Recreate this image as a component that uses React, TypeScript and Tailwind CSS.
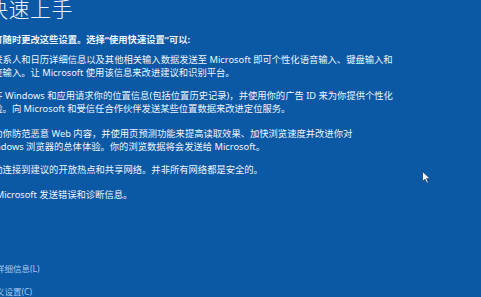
// Windows 10 OOBE "快速上手" screen (cropped on the left)

const bodyFont = {
  fontFamily: '"Noto Sans", "Noto Sans CJK SC", sans-serif',
};

const Cursor = () => (
  <svg
    className="absolute left-[422px] top-[171px] w-[9px] h-[13px]"
    viewBox="0 0 9 13"
    aria-hidden="true"
  >
    <path
      d="M0.5 0.5 L0.5 10.5 L3 8.2 L4.8 12.2 L6.3 11.5 L4.6 7.6 L8 7.6 Z"
      fill="#ffffff"
      stroke="#1b3f70"
      strokeWidth="0.8"
      strokeLinejoin="round"
    />
  </svg>
);

export default function App() {
  return (
    <div
      className="relative w-[481px] h-[297px] overflow-hidden bg-[#0b58a5] text-[#eef4fb]"
      style={bodyFont}
    >
      <div className="flex flex-col -ml-[16px] whitespace-nowrap">
        <h1 className="ml-[3px] -mt-[3px] text-[21px] leading-[24px] font-light tracking-[0.5px]">
          快速上手
        </h1>

        <p className="mt-[11.5px] text-[9.3px] leading-[13px] font-bold">
          你可随时更改这些设置。选择“使用快速设置”可以:
        </p>

        <p className="mt-[7px] text-[9.3px] leading-[13px]">
          将联系人和日历详细信息以及其他相关输入数据发送至 Microsoft 即可个性化语音输入、键盘输入和
          <br />
          墨迹输入。让 Microsoft 使用该信息来改进建议和识别平台。
        </p>

        <p className="mt-[10px] text-[9.3px] leading-[13px]">
          允许 Windows 和应用请求你的位置信息(包括位置历史记录)，并使用你的广告 ID 来为你提供个性化
          <br />
          体验。向 Microsoft 和受信任合作伙伴发送某些位置数据来改进定位服务。
        </p>

        <p className="mt-[12px] text-[9.3px] leading-[13px]">
          帮助你防范恶意 Web 内容，并使用页预测功能来提高读取效果、加快浏览速度并改进你对
          <br />
          Windows 浏览器的总体体验。你的浏览数据将会发送给 Microsoft。
        </p>

        <p className="mt-[10px] text-[9.3px] leading-[13px]">
          自动连接到建议的开放热点和共享网络。并非所有网络都是安全的。
        </p>

        <p className="mt-[12px] text-[9.3px] leading-[13px]">
          向 Microsoft 发送错误和诊断信息。
        </p>

        <a className="mt-[61px] -ml-[5px] text-[8.5px] leading-[13px] text-[#a9c9ee]">
          了解详细信息(L)
        </a>
        <a className="mt-[10.5px] -ml-[5px] text-[8.5px] leading-[13px] text-[#a9c9ee]">
          自定义设置(C)
        </a>
      </div>

      <Cursor />
    </div>
  );
}
